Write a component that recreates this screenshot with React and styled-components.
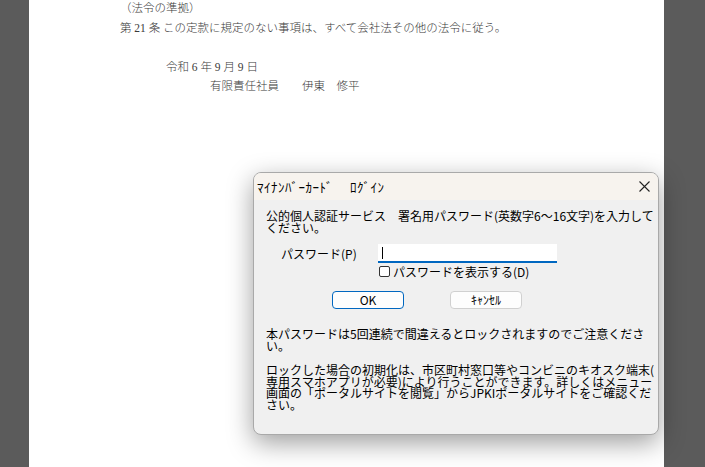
import styled, { createGlobalStyle } from 'styled-components'

const GlobalStyle = createGlobalStyle`
    html, body {
        margin: 0;
        padding: 0;
        background: #5b5b5b;
    }
    body {
        font-family: "Noto Sans CJK JP", "Noto Sans", sans-serif;
    }
`

const Desk = styled.div`
    position: relative;
    width: 705px;
    height: 467px;
    overflow: hidden;
    display: flex;
    background: #5b5b5b;
`
const Page = styled.div`
    margin-left: 29px;
    width: 635px;
    height: 467px;
    background: #ffffff;
`
const Doc = styled.div`
    padding-left: 91px;
    font-family: "Liberation Serif", "Noto Sans CJK JP", serif;
    font-size: 11.5px;
    line-height: 16px;
    color: #3a3a3a;
    font-weight: 300;
`
const DocLine = styled.div`
    margin-top: ${props => props.top || 0}px;
    padding-left: ${props => props.indent || 0}px;
    white-space: pre;
`

const Dialog = styled.div`
    position: absolute;
    left: 253px;
    top: 172px;
    width: 406px;
    height: 263px;
    box-sizing: border-box;
    border: 1px solid #a9a9a9;
    border-radius: 8px;
    background: #f0f0f0;
    box-shadow: 0 8px 26px rgba(0, 0, 0, 0.38);
    overflow: hidden;
    color: #000;
    font-size: 12px;
`
const TitleBar = styled.div`
    height: 27px;
    display: flex;
    align-items: center;
    justify-content: space-between;
    padding-left: 3px;
    background: #f7f3ee;
`
const Title = styled.span`
    font-size: 13px;
    white-space: pre;
    letter-spacing: 0.5px;
`
const CloseButton = styled.button`
    width: 28px;
    height: 27px;
    border: none;
    background: transparent;
    display: flex;
    align-items: center;
    justify-content: center;
    padding: 0;
`
const Body = styled.div`
    padding: 10px 0 0 12px;
`
const Paragraph = styled.p`
    margin: ${props => props.top || 0}px 0 0;
    line-height: 11.7px;
    white-space: pre;
`
const FieldRow = styled.div`
    display: flex;
    align-items: center;
    margin-top: 11px;
    padding-left: 15px;
`
const Label = styled.span`
    width: 97px;
    font-size: 12px;
`
const PasswordBox = styled.div`
    width: 179px;
    height: 19px;
    box-sizing: border-box;
    background: #ffffff;
    border-bottom: 2px solid #0067c0;
    display: flex;
    align-items: center;
    padding-left: 4px;
`
const Caret = styled.span`
    width: 1px;
    height: 12px;
    background: #000;
`
const CheckRow = styled.label`
    display: flex;
    align-items: center;
    gap: 3px;
    margin-top: 2px;
    padding-left: 113px;
    height: 13px;
`
const Box = styled.span`
    width: 11px;
    height: 11px;
    box-sizing: border-box;
    border: 1px solid #333;
    border-radius: 2px;
    background: #fff;
`
const ButtonRow = styled.div`
    display: flex;
    gap: 46px;
    margin-top: 13px;
    padding-left: 66px;
`
const Button = styled.button`
    width: 72px;
    height: 18px;
    padding: 0;
    box-sizing: border-box;
    border-radius: 4px;
    background: #fdfdfd;
    border: 1px solid ${props => props.primary ? "#0067c0" : "#d0d0d0"};
    font-family: "Noto Sans CJK JP", sans-serif;
    font-size: 12px;
    line-height: 14px;
    color: #000;
`

const CloseIcon = () => (
    <svg width="11" height="11" viewBox="0 0 11 11">
        <path d="M0.5 0.5 L10.5 10.5 M10.5 0.5 L0.5 10.5" stroke="#222" strokeWidth="1.1" fill="none" />
    </svg>
)

const intro = "公的個人認証サービス　署名用パスワード(英数字6～16文字)を入力して\nください。"
const warning = "本パスワードは5回連続で間違えるとロックされますのでご注意くださ\nい。"
const reset = "ロックした場合の初期化は、市区町村窓口等やコンビニのキオスク端末(\n専用スマホアプリが必要)により行うことができます。詳しくはメニュー\n画面の「ポータルサイトを閲覧」からJPKIポータルサイトをご確認くだ\nさい。"

const App = () => {
    return (
        <Desk>
            <GlobalStyle />
            <Page>
                <Doc>
                    <DocLine>（法令の準拠）</DocLine>
                    <DocLine top={4}>第 21 条 この定款に規定のない事項は、すべて会社法その他の法令に従う。</DocLine>
                    <DocLine top={23} indent={46}>令和 6 年 9 月 9 日</DocLine>
                    <DocLine top={3} indent={90}>有限責任社員　　伊東　修平</DocLine>
                </Doc>
            </Page>
            <Dialog>
                <TitleBar>
                    <Title>ﾏｲﾅﾝﾊﾞｰｶｰﾄﾞ　 ﾛｸﾞｲﾝ</Title>
                    <CloseButton><CloseIcon /></CloseButton>
                </TitleBar>
                <Body>
                    <Paragraph>{intro}</Paragraph>
                    <FieldRow>
                        <Label>パスワード(P)</Label>
                        <PasswordBox><Caret /></PasswordBox>
                    </FieldRow>
                    <CheckRow>
                        <Box />
                        <span>パスワードを表示する(D)</span>
                    </CheckRow>
                    <ButtonRow>
                        <Button primary>OK</Button>
                        <Button>ｷｬﾝｾﾙ</Button>
                    </ButtonRow>
                    <Paragraph top={19}>{warning}</Paragraph>
                    <Paragraph top={12}>{reset}</Paragraph>
                </Body>
            </Dialog>
        </Desk>
    )
}

export default App
